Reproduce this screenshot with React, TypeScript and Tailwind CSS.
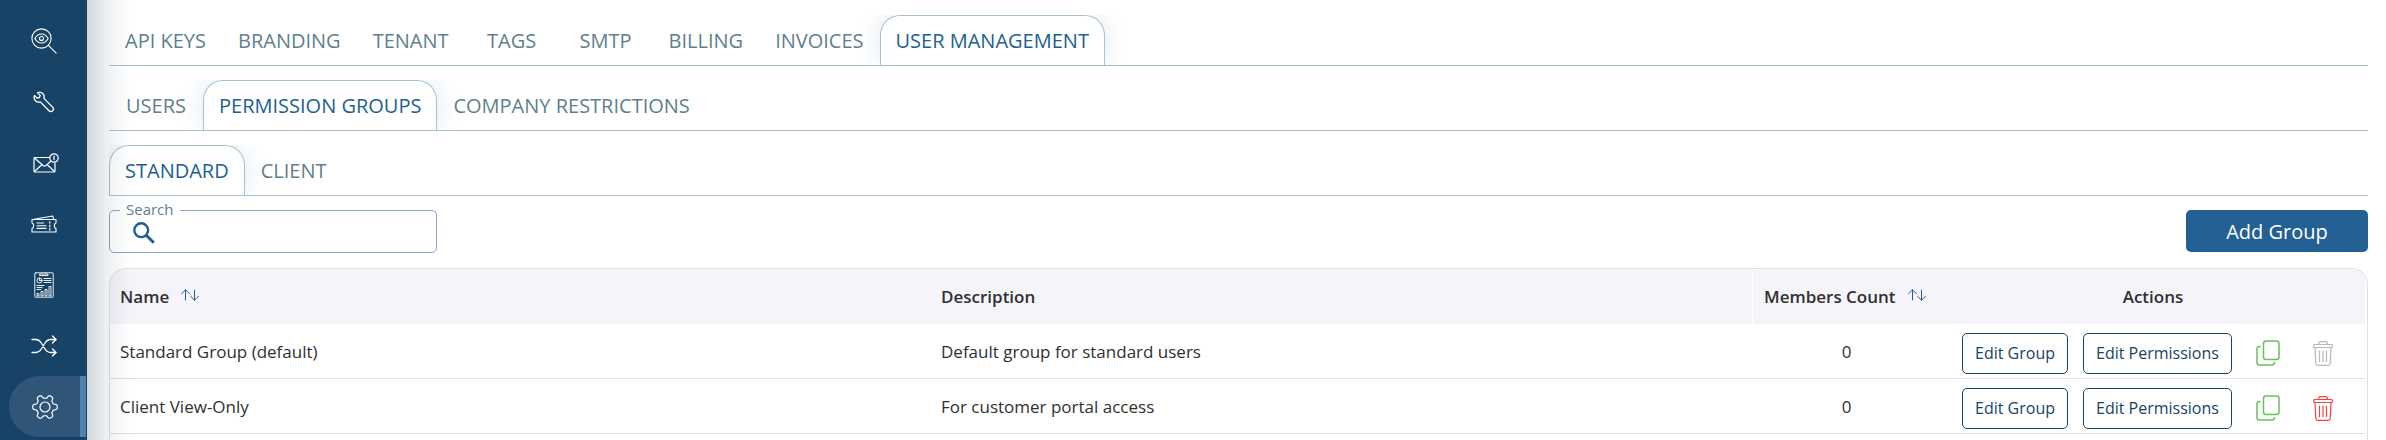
import React from "react";

type IconProps = { className?: string };

const line = {
  fill: "none",
  stroke: "currentColor",
  strokeLinecap: "round" as const,
  strokeLinejoin: "round" as const,
};

function InspectIcon({ className }: IconProps) {
  return (
    <svg viewBox="0 0 26 26" className={className} {...line} strokeWidth="1.1" aria-hidden="true">
      <circle cx="10.5" cy="10.5" r="9.6" />
      <path d="M3.8 10.5C5.6 7.4 8 6 10.5 6s4.9 1.4 6.7 4.5C15.4 13.6 13 15 10.5 15s-4.900-1.400-6.700-4.500z" />
      <circle cx="10.5" cy="10.5" r="2" />
      <path d="M17.4 17.4l7.800 7.800" />
    </svg>
  );
}

function WrenchIcon({ className }: IconProps) {
  return (
    <svg viewBox="0 0 22 22" className={className} {...line} strokeWidth="1.3" aria-hidden="true">
      <path d="M4.5 1.600l2.600 2.700-.6 2.200-2.300.6L1.500 4.500c-.8 2.200-.2 4.300 1.200 5.500 1.300 1.200 3 1.300 4.600.9l8.700 8.800a2.500 2.500 0 0 0 3.600-3.600l-8.700-8.700c.5-1.800.3-3.400-1-4.700C8.600 1.300 6.500.8 4.500 1.600z" />
    </svg>
  );
}

function MailIcon({ className }: IconProps) {
  return (
    <svg viewBox="-4 0 30 20" className={className} {...line} strokeWidth="1.2" aria-hidden="true">
      <path d="M16.500 4.500H2A1 1 0 0 0 1 5.500v12.500a1 1 0 0 0 1 1h19a1 1 0 0 0 1-1V10" />
      <path d="M1.500 5l8.500 7.500c1 .8 2 .8 3 0L18 8M1.500 18.500l7.500-7M21.500 18.500l-7.500-7" />
      <circle cx="21" cy="5" r="4.200" />
      <path d="M21 3.200v3.400" />
    </svg>
  );
}

function TicketIcon({ className }: IconProps) {
  return (
    <svg viewBox="0 0 26 18" className={className} {...line} strokeWidth="1.1" aria-hidden="true">
      <path d="M1 4.500h24v3.500c-2.200.6-2.200 4.900 0 5.500v3.500H1v-3.500c2.200-.6 2.200-4.900 0-5.500z" />
      <path d="M3 4.200L21.800 1l.7 3.200M6 8h6.500M6 10.700h9M6 13.400h9M18.800 6.500v1.800M18.800 10v1.800M18.800 13.400v1.800" />
    </svg>
  );
}

function ReportIcon({ className }: IconProps) {
  return (
    <svg viewBox="0 0 20 26" className={className} {...line} strokeWidth="0.9" aria-hidden="true">
      <rect x="0.800" y="0.800" width="18.400" height="24.400" rx="0.800" />
      <path d="M6 3.500h8V2H6zM10 6.500h7M10 8.500h7M10 10.500h7M3 13.500h7M3 15.500h5M3 17.500h4" />
      <circle cx="5.500" cy="8.500" r="2.500" />
      <path d="M5.500 8.500V6M5.500 8.500H8" />
      <path d="M3 23.500v-2h2v2zM7 23.500v-4h2v4zM11 23.500v-6h2v6zM15 23.500v-9h2v9z" />
    </svg>
  );
}

function ShuffleIcon({ className }: IconProps) {
  return (
    <svg viewBox="0 0 26 22" className={className} {...line} strokeWidth="1.300" aria-hidden="true">
      <path d="M1 4.500h4c2.500 0 4 1.500 5.300 3.500l3.400 5.500c1.300 2.200 3 4 6 4H25M1 17.500h4c2.500 0 4-1.500 5.300-3.500l3.400-5.500c1.300-2.200 3-4 6-4H25" />
      <path d="M21.500 1L25 4.500 21.500 8M21.500 14l3.500 3.500-3.500 3.500" />
    </svg>
  );
}

/* Outline of a six-lobed gear around (13, 12). */
const gearOutline =
  Array.from({ length: 120 }, (_, i) => {
    const angle = (i / 120) * Math.PI * 2;
    const radius = 10.5 + 1.8 * Math.tanh(2.2 * Math.cos(6 * angle));
    const x = 13 + radius * Math.cos(angle);
    const y = 12 + radius * Math.sin(angle);
    return `${i === 0 ? "M" : "L"}${x.toFixed(2)} ${y.toFixed(2)}`;
  }).join("") + "Z";

function GearIcon({ className }: IconProps) {
  return (
    <svg viewBox="0 0 26 24" className={className} {...line} strokeWidth="1.200" aria-hidden="true">
      <circle cx="13" cy="12" r="5" />
      <path d={gearOutline} />
    </svg>
  );
}

function SortIcon({ className }: IconProps) {
  return (
    <svg viewBox="0 0 18 12" className={className} {...line} strokeWidth="1" aria-hidden="true">
      <path d="M4.500 11V.8M.6 4.700L4.500.8l3.900 3.900M13.500 1v10.200M9.600 7.300l3.900 3.900 3.900-3.900" />
    </svg>
  );
}

function SearchIcon({ className }: IconProps) {
  return (
    <svg viewBox="0 0 22 22" className={className} fill="none" stroke="currentColor" strokeWidth="2.400" aria-hidden="true">
      <circle cx="8.200" cy="8.200" r="6.900" />
      <path d="M13.200 13.200l7.600 7.600" strokeWidth="3" />
    </svg>
  );
}

function CopyIcon({ className }: IconProps) {
  return (
    <svg viewBox="0 0 24 26" className={className} {...line} strokeWidth="1.500" aria-hidden="true">
      <rect x="7.500" y="1" width="15.500" height="18.500" rx="2.500" />
      <path d="M4 6.500c-1.800 0-3 .8-3 2.500v13.500c0 1.500 1 2.500 2.500 2.500H16c1.500 0 2.500-.8 2.500-2.500" />
    </svg>
  );
}

function TrashIcon({ className }: IconProps) {
  return (
    <svg viewBox="0 0 20 25" className={className} {...line} strokeWidth="1.200" aria-hidden="true">
      <path d="M5.500 3.500c0-1.800.8-2.800 2-2.800h5c1.200 0 2 1 2 2.800" />
      <rect x="0.600" y="3.500" width="18.800" height="3" rx="1" />
      <path d="M2 6.500l.8 16c.1 1.200.7 1.900 1.900 1.900h10.600c1.200 0 1.800-.7 1.900-1.900l.8-16M6.500 10v10.500M10 10v10.500M13.500 10v10.500" />
    </svg>
  );
}

const navItems = [
  { label: "Inspect", icon: <InspectIcon className="h-[26px] w-[26px]" /> },
  { label: "Tools", icon: <WrenchIcon className="h-[22px] w-[22px]" /> },
  { label: "Messages", icon: <MailIcon className="h-5 w-[30px]" /> },
  { label: "Tickets", icon: <TicketIcon className="h-[18px] w-[26px]" /> },
  { label: "Reports", icon: <ReportIcon className="h-[26px] w-5" /> },
  { label: "Automation", icon: <ShuffleIcon className="h-[22px] w-[26px]" /> },
  { label: "Settings", icon: <GearIcon className="h-6 w-[26px]" />, active: true },
];

function Sidebar() {
  return (
    <nav aria-label="Main" className="flex w-[87px] shrink-0 flex-col bg-[#174366] pt-2.5 pr-px pl-[9px] text-white">
      {navItems.map((item) => (
        <a
          key={item.label}
          href="#"
          aria-label={item.label}
          className={
            item.active
              ? "flex h-[61px] shrink-0 items-center justify-center rounded-l-full border-r-[6px] border-[#5083ad] bg-[#2f5678]"
              : "flex h-[61px] shrink-0 items-center justify-center pr-2"
          }
        >
          {item.icon}
        </a>
      ))}
    </nav>
  );
}

function TabStrip({ label, tabs, active }: { label: string; tabs: string[]; active: string }) {
  return (
    <div role="tablist" aria-label={label} className="flex overflow-hidden border-b border-[#a9c1cf]">
      {tabs.map((tab) => (
        <button
          key={tab}
          type="button"
          role="tab"
          aria-selected={tab === active}
          className={
            tab === active
              ? "h-[50px] min-w-[94px] rounded-t-[20px] border border-b-0 border-[#a9c1cf] px-[15px] pt-px text-xl text-[#205f93] shadow-[0_0_24px_rgba(32,95,147,0.14)]"
              : "h-[50px] min-w-[94px] px-4 pt-0.5 text-xl text-[#607f8d]"
          }
        >
          {tab}
        </button>
      ))}
    </div>
  );
}

const groups = [
  { name: "Standard Group (default)", description: "Default group for standard users", members: 0, locked: true },
  { name: "Client View-Only", description: "For customer portal access", members: 0, locked: false },
];

const outlineButton = "h-[41px] rounded-[5px] border border-[#174366] bg-white px-3 text-base text-[#174366]";

function GroupsTable() {
  return (
    <div className="mt-[15px] min-h-[200px] rounded-t-[17px] border border-b-0 border-[#dfdfe9] pr-0.5">
      <table className="w-full table-fixed border-separate border-spacing-0 text-left text-[17px] text-[#303030]">
        <colgroup>
          <col />
          <col />
          <col className="w-[189px]" />
          <col className="w-[424px]" />
        </colgroup>
        <thead>
          <tr className="h-[55px] *:bg-[#f4f4fa] *:font-semibold">
            <th scope="col" className="rounded-tl-[16px] px-2.5">
              <button type="button" className="flex items-center gap-3 font-semibold">
                Name
                <SortIcon className="mb-1 h-3 w-[18px] text-[#205f93]" />
              </button>
            </th>
            <th scope="col" className="px-2.5">Description</th>
            <th scope="col" className="border-l border-white px-[11px]">
              <button type="button" className="flex items-center gap-3 font-semibold whitespace-nowrap">
                Members Count
                <SortIcon className="mb-1 h-3 w-[18px] text-[#205f93]" />
              </button>
            </th>
            <th scope="col" className="rounded-tr-[14px] text-center">Actions</th>
          </tr>
        </thead>
        <tbody>
          {groups.map((group) => (
            <tr key={group.name} className="h-[55px] *:border-b *:border-[#dfdfe9]">
              <td className="px-2.5 pt-0.5">{group.name}</td>
              <td className="px-2.5 pt-0.5">{group.description}</td>
              <td className="pt-0.5 text-center">{group.members}</td>
              <td className="pl-[21px]">
                <div className="flex items-center pt-1">
                  <button type="button" className={outlineButton}>Edit Group</button>
                  <button type="button" className={`ml-[15px] ${outlineButton}`}>Edit Permissions</button>
                  <button type="button" aria-label={`Copy ${group.name}`} className="ml-6 text-[#69c15a]">
                    <CopyIcon className="h-[26px] w-6" />
                  </button>
                  <button
                    type="button"
                    disabled={group.locked}
                    aria-label={`Delete ${group.name}`}
                    className={group.locked ? "ml-[33px] text-[#b8b8b8]" : "ml-[33px] text-[#f4423f]"}
                  >
                    <TrashIcon className="h-[25px] w-5" />
                  </button>
                </div>
              </td>
            </tr>
          ))}
        </tbody>
      </table>
    </div>
  );
}

export default function App() {
  return (
    <div className="flex h-screen overflow-hidden bg-white font-['Open_Sans',sans-serif]">
      <Sidebar />
      <main className="relative min-w-0 flex-1 pt-[15px] pr-[18px] pl-[22px]">
        <div className="flex flex-col gap-3.5">
          <TabStrip
            label="Administration"
            tabs={["API KEYS", "BRANDING", "TENANT", "TAGS", "SMTP", "BILLING", "INVOICES", "USER MANAGEMENT"]}
            active="USER MANAGEMENT"
          />
          <TabStrip label="User management" tabs={["USERS", "PERMISSION GROUPS", "COMPANY RESTRICTIONS"]} active="PERMISSION GROUPS" />
          <TabStrip label="Group type" tabs={["STANDARD", "CLIENT"]} active="STANDARD" />
        </div>
        <div className="mt-3.5 flex items-start justify-between">
          <div className="relative flex h-[43px] w-[328px] items-center rounded-[5px] border border-[#8aa5c8] pl-[23px]">
            <label htmlFor="group-search" className="absolute -top-[13px] left-2.5 bg-white px-1.5 text-[15px] leading-[22px] text-[#607f8d]">
              Search
            </label>
            <SearchIcon className="mt-0.5 h-[22px] w-[22px] text-[#205f93]" />
            <input id="group-search" type="text" className="h-full min-w-0 flex-1 bg-transparent px-2 text-base outline-none" />
          </div>
          <button type="button" className="h-[42px] w-[182px] rounded-[5px] bg-[#236093] pt-0.5 text-xl text-white">
            Add Group
          </button>
        </div>
        <GroupsTable />
        <div className="pointer-events-none absolute inset-y-0 left-0 w-11 bg-linear-to-r from-[#0f3040]/20 via-[#0f3040]/8 via-40% to-transparent" />
      </main>
    </div>
  );
}
